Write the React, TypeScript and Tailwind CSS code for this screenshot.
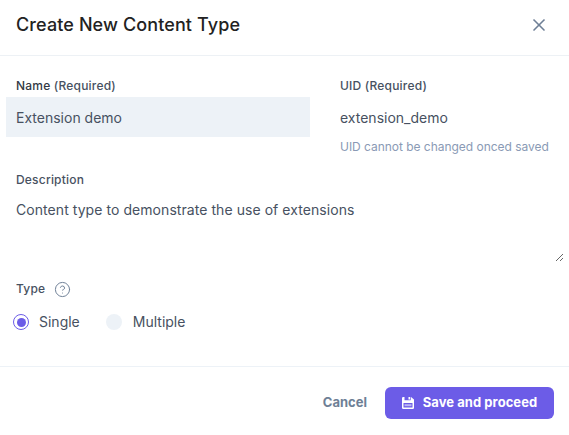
import { X, CircleHelp } from "lucide-react";

const SaveIcon = () => (
  <svg width="12" height="12" viewBox="0 0 12 12" className="shrink-0 mt-[-1px]">
    <path
      fill="#fff"
      fillRule="evenodd"
      d="M1.200 0H2.500v3.200h6.200V0h.3L12 2.400v8.400A1.200 1.200 0 0 1 10.800 12H1.200A1.200 1.200 0 0 1 0 10.800V1.200A1.200 1.200 0 0 1 1.200 0ZM6.500 0H8v2.400H6.500V0ZM1.500 6v4.500h9V6h-9Z"
    />
    <path fill="#fff" d="M2.500 7.200h7v2h-7z" opacity="0.55" />
  </svg>
);

const App = () => {
  return (
    <div className="w-[569px] h-[435px] bg-white flex flex-col overflow-hidden font-['Inter',sans-serif]">
      {/* Header */}
      <header className="h-[56px] shrink-0 border-b border-[#edf1f5] pl-4 pr-[20px] flex items-center justify-between">
        <h1 className="text-[18px] leading-[24px] font-medium text-[#222222] tracking-[0.11px] mt-[-6px]">Create New Content Type</h1>
        <button type="button" className="text-[#6e7f96] mt-[-6px]">
          <X className="h-[20px] w-[20px]" strokeWidth={2} />
        </button>
      </header>

      {/* Form */}
      <main className="flex-1 flex flex-col pt-[22px]">
        <div className="flex">
          <div className="w-[304px] ml-[6px]">
            <label className="block pl-[10px] text-[12px] leading-[16px] font-medium text-[#333a45] tracking-[0.2px]">
              Name <span className="text-[#475161]">(Required)</span>
            </label>
            <div className="mt-[3px] h-[40px] bg-[#edf2f7] pl-[10px] flex items-center text-[14px] text-[#475161]">
              Extension demo
            </div>
          </div>
          <div className="ml-[30px]">
            <label className="block text-[12px] leading-[16px] font-medium text-[#475161] tracking-[0.2px]">UID (Required)</label>
            <div className="mt-[3px] h-[40px] flex items-center text-[14px] text-[#475161]">extension_demo</div>
            <p className="text-[12px] leading-[20px] text-[#8a9ab5] tracking-[-0.03px]">UID cannot be changed onced saved</p>
          </div>
        </div>

        <div className="mt-[15px] pl-4 pr-[5px]">
          <label className="block text-[12px] leading-[16px] font-medium text-[#475161] tracking-[0.2px]">Description</label>
          <textarea
            readOnly
            className="block mt-[12px] w-full h-[62px] resize-y outline-none text-[14px] leading-[20px] text-[#475161] tracking-[0.06px]"
            defaultValue="Content type to demonstrate the use of extensions"
          />
        </div>

        <div className="mt-[19px] pl-4 flex items-center gap-[9px] h-[16px]">
          <span className="text-[12px] leading-[16px] font-medium text-[#475161] tracking-[0.2px]">Type</span>
          <CircleHelp className="h-[17px] w-[17px] text-[#6e7f96]" strokeWidth={1.4} />
        </div>

        <div className="mt-[15px] ml-[13px] flex items-center text-[14px] leading-[20px] text-[#475161]">
          <span className="h-4 w-4 rounded-full border border-[#6c5ce7] flex items-center justify-center">
            <span className="h-[9px] w-[9px] rounded-full bg-[#6c5ce7]" />
          </span>
          <span className="ml-[10px]">Single</span>
          <span className="ml-[26px] h-4 w-4 rounded-full bg-[#edf2f7]" />
          <span className="ml-[11px]">Multiple</span>
        </div>
      </main>

      {/* Footer */}
      <footer className="h-[69px] shrink-0 border-t border-[#edf2f7] pt-[4px] pr-[15px] flex items-center justify-end gap-[18px]">
        <button type="button" className="text-[13px] font-bold text-[#6e7f96]">Cancel</button>
        <button
          type="button"
          className="h-[32px] w-[169px] rounded-[6px] bg-[#6c5ce7] flex items-center justify-center gap-[9px] text-[13px] font-bold text-white tracking-[0.05px]"
        >
          <SaveIcon />
          Save and proceed
        </button>
      </footer>
    </div>
  );
};

export default App;
